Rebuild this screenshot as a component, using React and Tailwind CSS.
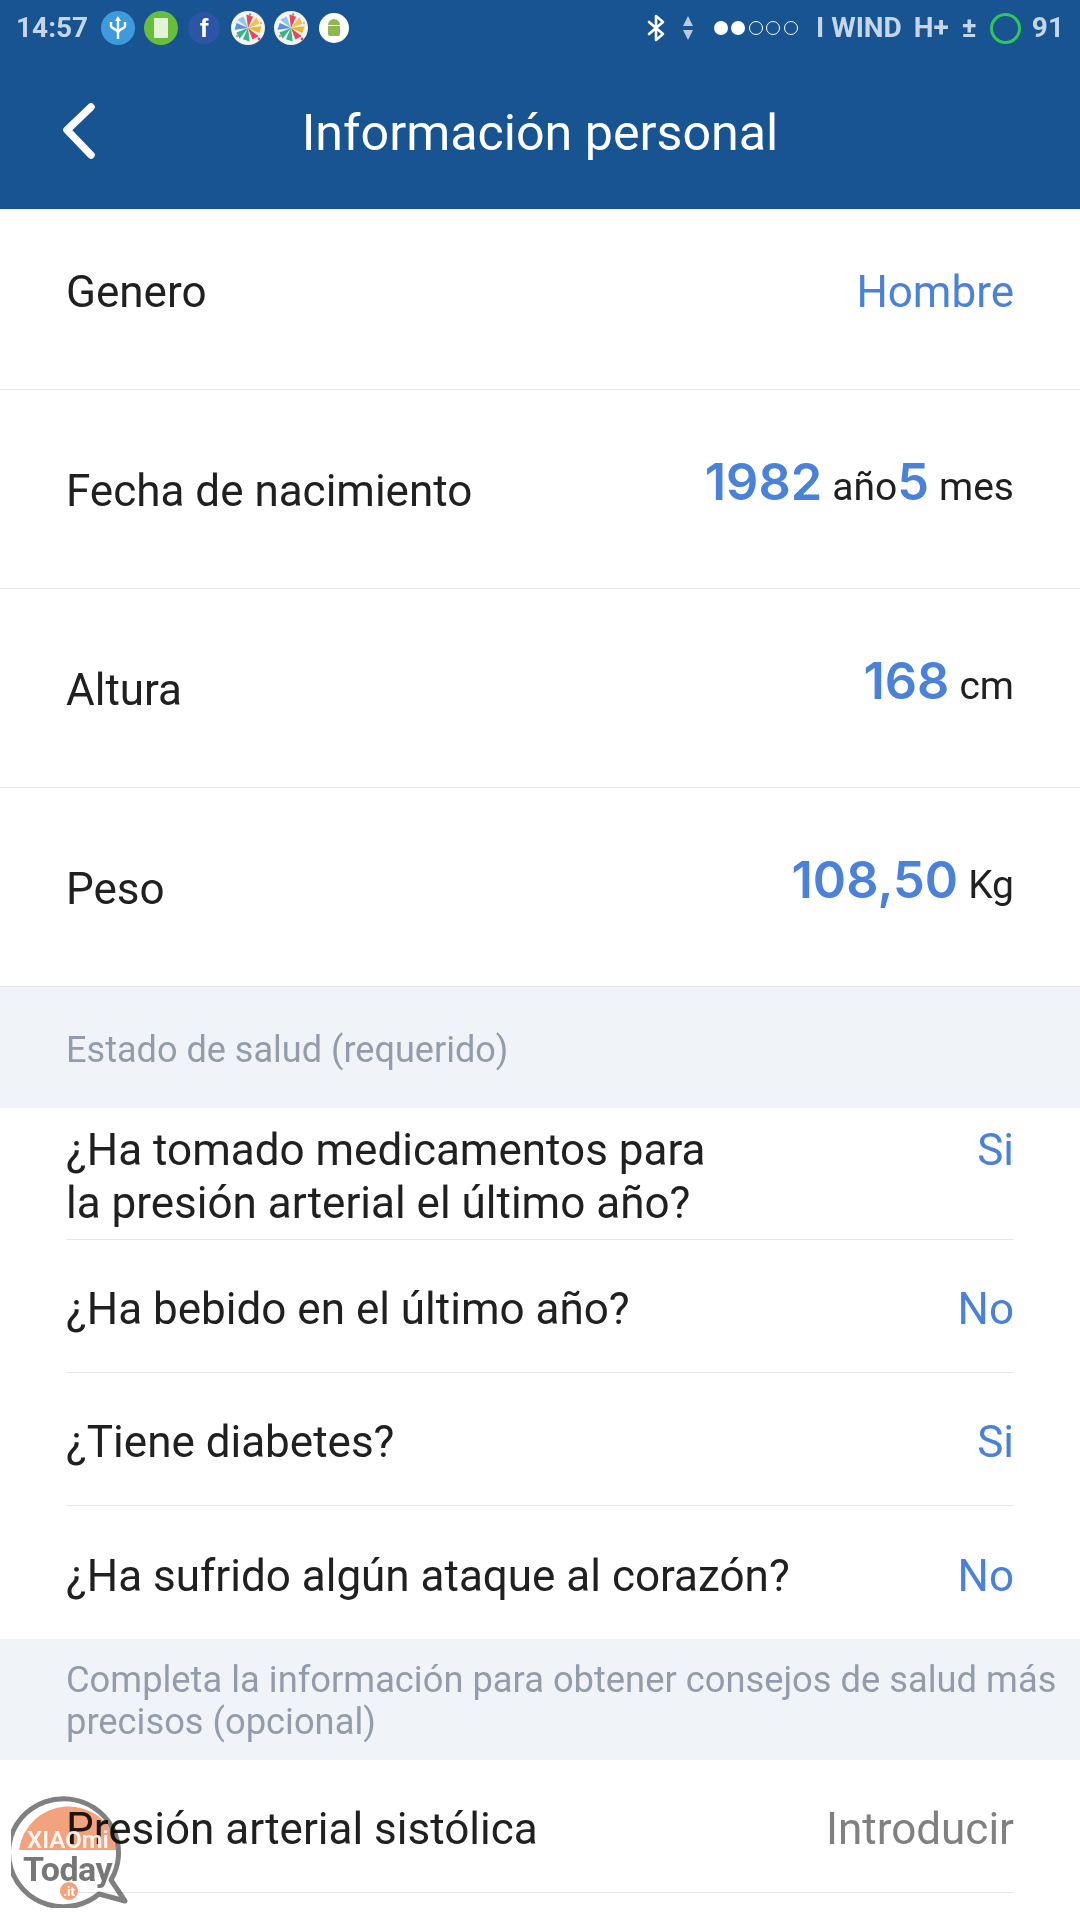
import React from 'react'

function Pinwheel() {
  const cols = ['#e8485a', '#f5c04a', '#f5b31f', '#e8485a', '#35b58a', '#35b58a', '#5b8fe0', '#8fc5e8']
  return (
    <svg width="34" height="34" viewBox="0 0 34 34">
      <circle cx="17" cy="17" r="17" fill="#f3f4f7" />
      {cols.map((c, i) => (
        <path key={i} d="M17 17 L13 4 L20 5 Z" fill={c} transform={`rotate(${i * 45 + 10} 17 17)`} />
      ))}
      <circle cx="19" cy="3.5" r="1.2" fill="#8a8fa0" />
      <circle cx="30" cy="12" r="1.2" fill="#f5c04a" />
      <circle cx="28" cy="28" r="1.4" fill="#e8485a" />
      <circle cx="6" cy="25" r="1.2" fill="#e8907a" />
    </svg>
  )
}

function StatusBar() {
  return (
    <div className="h-[56px] pl-[16px] pr-[16px] flex items-center justify-between text-[#c5d6ea] font-bold">
      <div className="flex items-center">
        <span className="text-[28px] w-[85px] leading-none">14:57</span>
        <div className="w-[34px] h-[34px] rounded-full bg-[#3d9bdc] flex items-center justify-center">
          <svg width="20" height="26" viewBox="0 0 20 26" fill="none" stroke="#fff" strokeWidth="2.4">
            <path d="M10 5v19M3 7v4c0 3 7 3 7 7M17 7v4c0 3-7 3-7 7" />
            <path d="M10 1l3 5H7z" fill="#fff" stroke="none" />
          </svg>
        </div>
        <div className="ml-[9px] w-[34px] h-[34px] rounded-full bg-[#67bd3c] flex items-center justify-center">
          <div className="w-[14px] h-[20px] bg-[#e4f3d8] rounded-[1px]" />
        </div>
        <div className="ml-[10px] w-[32px] h-[32px] rounded-full bg-[#2d55a5] flex items-center justify-center text-white text-[26px] font-['Liberation_Sans'] leading-none">f</div>
        <div className="ml-[11px] flex"><Pinwheel /></div>
        <div className="ml-[9px] flex"><Pinwheel /></div>
        <div className="ml-[11px] w-[30px] h-[30px] rounded-full bg-white flex items-center justify-center">
          <svg width="16" height="20" viewBox="0 0 16 20" fill="#8cb84f">
            <path d="M2 7a6 6 0 0 1 12 0z" />
            <path d="M2 8h12v8a2 2 0 0 1-2 2H4a2 2 0 0 1-2-2z" />
          </svg>
        </div>
      </div>
      <div className="flex items-center">
        <svg width="20" height="28" viewBox="0 0 20 28" fill="none" stroke="#fff" strokeWidth="2.6" strokeLinecap="round" strokeLinejoin="round">
          <path d="M3 8l14 12-7 6V2l7 6L3 20" />
        </svg>
        <svg className="ml-[17px]" width="10" height="26" viewBox="0 0 10 26" fill="#b9cbe0">
          <path d="M5 1l5 10H0zM5 25L0 15h10z" />
        </svg>
        <div className="ml-[21px] flex items-center gap-[3.5px]">
          <div className="w-[14px] h-[14px] rounded-full bg-white" />
          <div className="w-[14px] h-[14px] rounded-full bg-white" />
          <div className="w-[14px] h-[14px] rounded-full border border-white" />
          <div className="w-[14px] h-[14px] rounded-full border border-white" />
          <div className="w-[14px] h-[14px] rounded-full border border-white" />
        </div>
        <span className="ml-[18px] text-[28px] leading-none">I WIND</span>
        <span className="ml-[12px] text-[28px] leading-none">H+</span>
        <span className="ml-[13px] text-[28px] leading-none">±</span>
        <div className="ml-[13px] w-[31px] h-[31px] rounded-full border-[3px] border-[#2fc65a]" />
        <span className="ml-[11px] text-[28px] leading-none">91</span>
      </div>
    </div>
  )
}

function Header() {
  return (
    <div className="h-[209px] bg-[#175491] text-white">
      <StatusBar />
      <div className="relative h-[153px] pt-[2px] flex items-center justify-center">
        <svg className="absolute left-[62px] top-[47px]" width="34" height="56" viewBox="0 0 34 56" fill="none" stroke="#fff" strokeWidth="7.5" strokeLinecap="round" strokeLinejoin="round">
          <path d="M29 4L5 27l24 25" />
        </svg>
        <span className="text-[50.2px] leading-none">Información personal</span>
      </div>
    </div>
  )
}

function Num({ children }) {
  return <span className="text-[50.5px] font-semibold text-[#4a81d9] font-['Inter'] leading-none">{children}</span>
}

function BigRow({ label, children }) {
  return (
    <div className="h-[199px] px-[66px] flex items-center justify-between border-b border-[#e6e6e6]">
      <span className="mt-[4px] text-[44px] leading-none text-[#202020]">{label}</span>
      <span className="-mt-[4px] flex items-baseline text-[39px] text-[#202020]">{children}</span>
    </div>
  )
}

function Question({ children, value, first, last }) {
  return (
    <div className={`mx-[66px] flex justify-between ${first ? 'h-[132px] items-start pt-[16px]' : 'h-[133px] pt-[7px] items-center'} ${last ? '' : 'border-b border-[#e6e6e6]'}`}>
      <span className="text-[44px] leading-[52.5px] text-[#202020]">{children}</span>
      <span className="text-[44px] leading-[52.5px] text-[#4a81d9]">{value}</span>
    </div>
  )
}

function Watermark() {
  return (
    <div className="absolute left-[11px] top-[1794px] w-[117px] h-[114px]">
      <svg className="absolute inset-0 mix-blend-multiply" width="117" height="114" viewBox="0 0 117 114" fill="none">
        <path d="M8 56 A50 50 0 0 1 106 50 L107 56 Z" fill="#f2a27c" />
        <path d="M100 86 A55 54 0 1 0 88 100 L114 107 Z" stroke="#808080" strokeWidth="5" strokeLinejoin="round" />
      </svg>
      <span className="absolute left-[16px] top-[34px] text-white text-[24px] font-semibold leading-none opacity-90">XIAOmi</span>
      <span className="absolute left-[12px] top-[58px] text-[#777] text-[34px] font-bold leading-none tracking-[-0.5px]">Today</span>
      <div className="absolute left-[49px] top-[88px] w-[18px] h-[18px] rounded-full bg-[#f2a27c] flex items-center justify-center text-white text-[13px] font-bold leading-none">.it</div>
    </div>
  )
}

export default function App() {
  return (
    <div className="relative w-[1080px] h-[1920px] overflow-hidden bg-white font-['Roboto',sans-serif]">
      <Header />

      <div className="h-[181px] pb-[14px] px-[66px] flex items-center justify-between border-b border-[#e6e6e6]">
        <span className="text-[44px] leading-none text-[#202020]">Genero</span>
        <span className="text-[44px] leading-none text-[#4a81d9]">Hombre</span>
      </div>
      <BigRow label="Fecha de nacimiento">
        <Num>1982</Num><span className="ml-[10px]">año</span><Num>5</Num><span className="ml-[10px]">mes</span>
      </BigRow>
      <BigRow label="Altura">
        <Num>168</Num><span className="ml-[10px]">cm</span>
      </BigRow>
      <BigRow label="Peso">
        <Num>108,50</Num><span className="ml-[10px]">Kg</span>
      </BigRow>

      <div className="h-[121px] pt-[5px] bg-[#f0f3f8] px-[66px] flex items-center">
        <span className="text-[36.1px] leading-none text-[#929caa]">Estado de salud (requerido)</span>
      </div>

      <Question value="Si" first>¿Ha tomado medicamentos para<br />la presión arterial el último año?</Question>
      <Question value="No">¿Ha bebido en el último año?</Question>
      <Question value="Si">¿Tiene diabetes?</Question>
      <Question value="No" last>¿Ha sufrido algún ataque al corazón?</Question>

      <div className="h-[121px] pt-[3px] bg-[#f0f3f8] pl-[66px] pr-[20px] flex items-center">
        <span className="text-[36.3px] leading-[42px] text-[#929caa]">Completa la información para obtener consejos de salud más<br />precisos (opcional)</span>
      </div>

      <div className="mx-[66px] h-[133px] pt-[5px] flex items-center justify-between border-b border-[#e6e6e6]">
        <span className="text-[44px] leading-none text-[#202020]">Presión arterial sistólica</span>
        <span className="text-[44px] leading-none text-[#808080]">Introducir</span>
      </div>

      <Watermark />
    </div>
  )
}
